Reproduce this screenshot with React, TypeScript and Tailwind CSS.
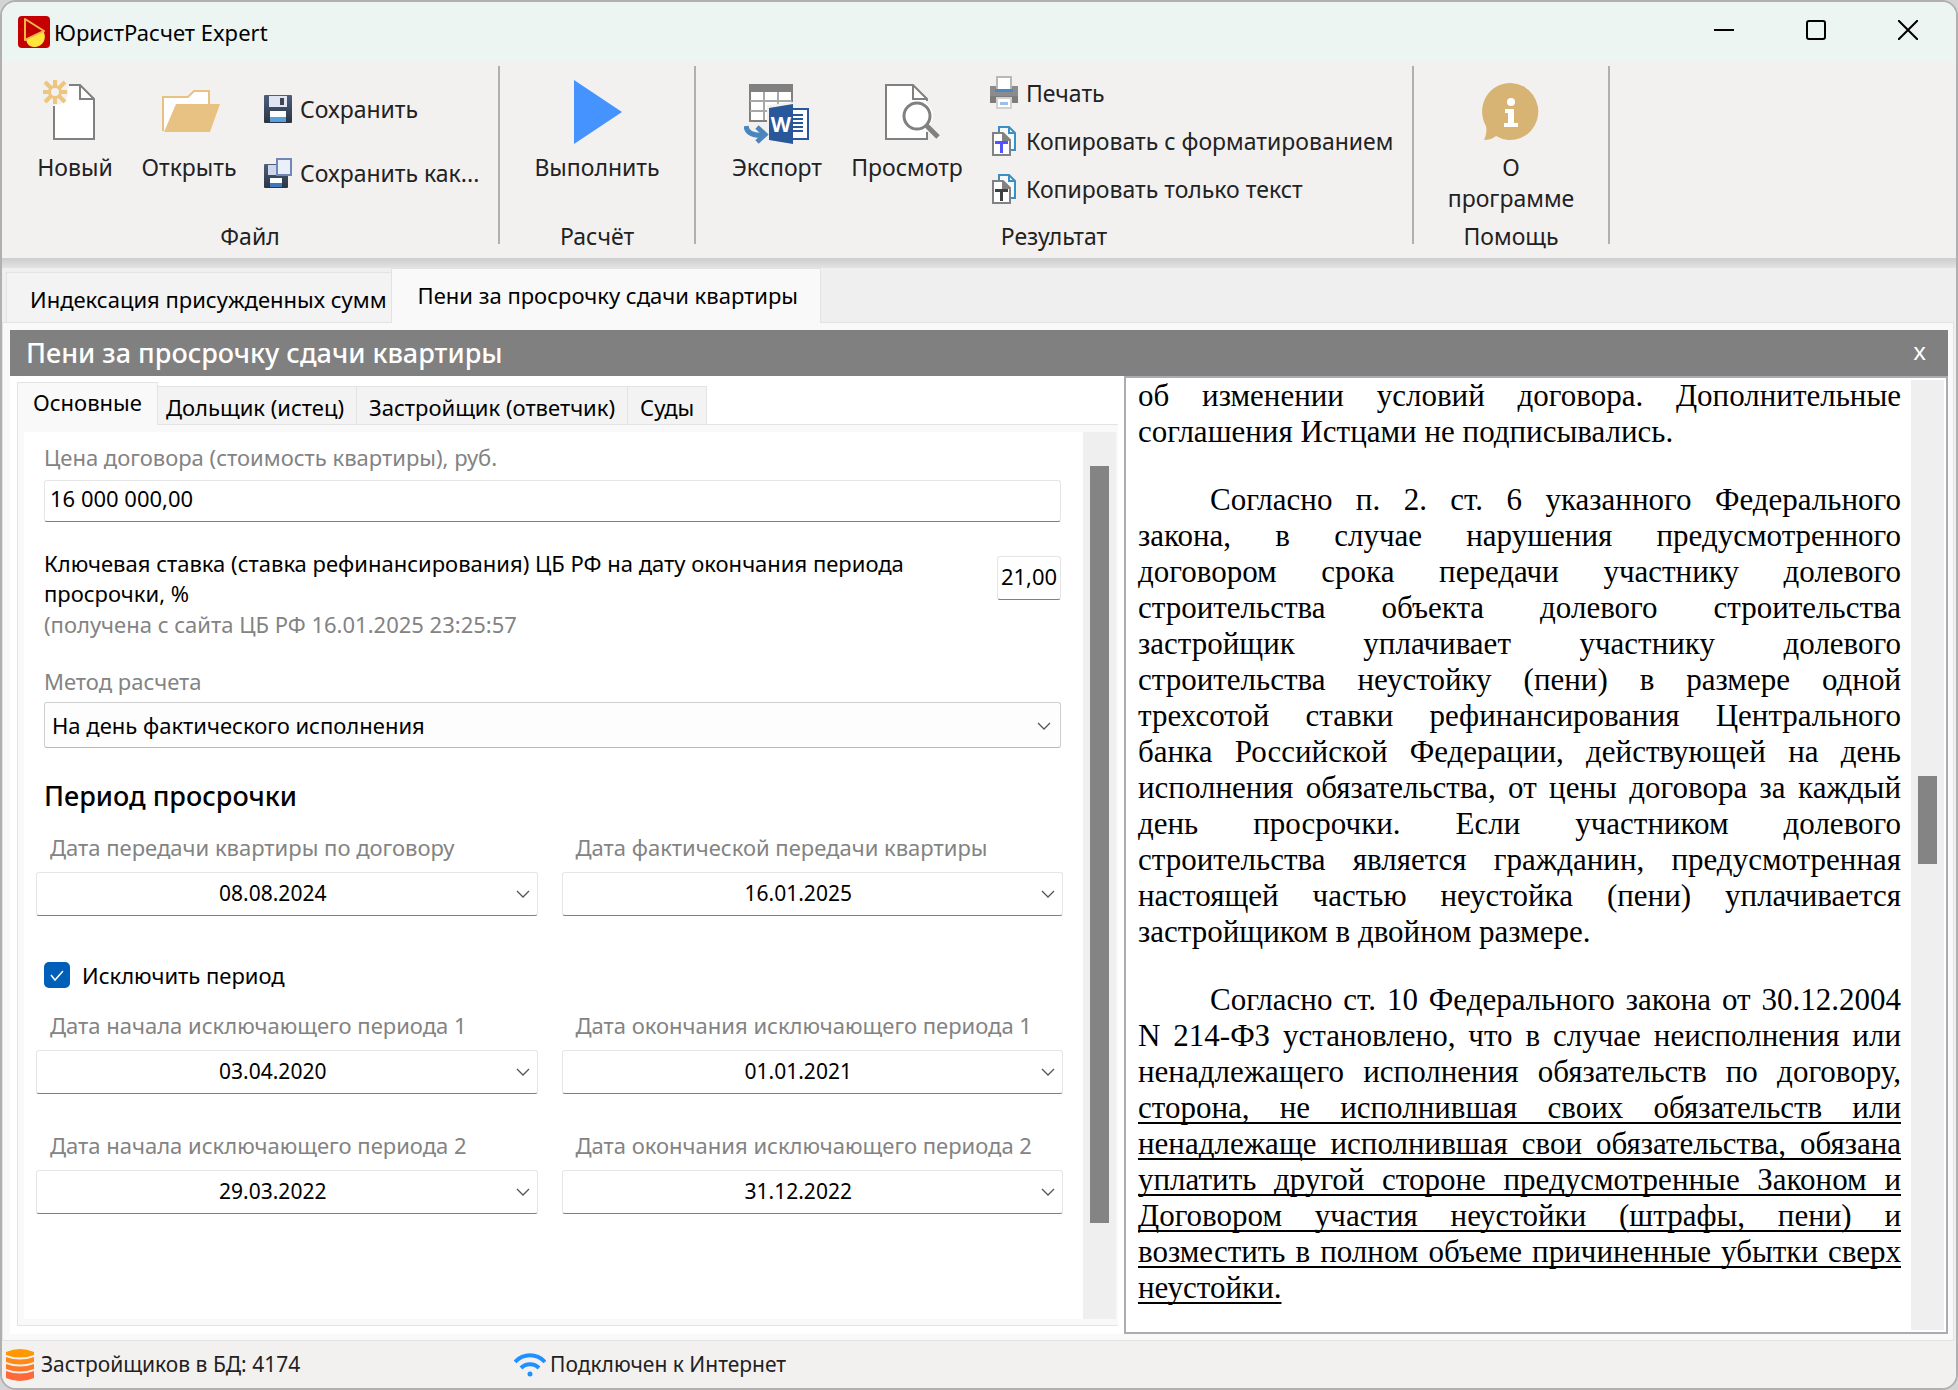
import { ReactNode } from "react";

const excludedPeriods = [
  { n: 1, from: "03.04.2020", to: "01.01.2021" },
  { n: 2, from: "29.03.2022", to: "31.12.2022" },
];

const innerTabs = ["Дольщик (истец)", "Застройщик (ответчик)", "Суды"];

/* ---------- Icons ---------- */

function AppIcon() {
  return (
    <svg width="32" height="32" viewBox="0 0 32 32">
      <rect width="32" height="32" rx="4" fill="#c40000" />
      <path d="M8 22 L24 14 C30 20 26 31 16 31 C11 31 8 27 8 22 Z" fill="#ffe53c" />
      <path d="M7 3 L26 15 L7 24 Z" fill="#c00000" stroke="#f4b545" strokeWidth="2" strokeLinejoin="round" />
      <path d="M9 24 L26 16 C27 24 22 30 15 30 C11 29 9 27 9 24 Z" fill="#ffe53c" />
    </svg>
  );
}

function NewIcon() {
  return (
    <svg width="64" height="64" viewBox="0 0 64 64" fill="none">
      <path d="M11 26 V59 H51 V20 L36 5 H26 L20 20 Z" fill="#fff" />
      <path d="M26 5 H37 L51 19 V59 H11 V26" stroke="#808080" strokeWidth="2" />
      <path d="M37 5 V19 H51" stroke="#808080" strokeWidth="2" />
      <circle cx="12" cy="12" r="13" fill="#f3f1f0" />
      <circle cx="12" cy="12" r="5.500" stroke="#ecc67f" strokeWidth="3" />
      <path
        d="M12 0 V6 M12 18 V24 M0 12 H6 M18 12 H24 M2 2 L8 8 M16 16 L22 22 M22 2 L16 8 M2 22 L8 16"
        stroke="#ecc67f"
        strokeWidth="4"
      />
    </svg>
  );
}

function OpenIcon() {
  return (
    <svg width="64" height="64" viewBox="0 0 64 64">
      <path d="M6 51 V17 H31 L37 11 H52 V26" fill="#fff" stroke="#e8c282" strokeWidth="2" />
      <path d="M19 24 H63 L53 52 H7 Z" fill="#e8c282" />
    </svg>
  );
}

function RunIcon() {
  return (
    <svg width="64" height="64" viewBox="0 0 64 64">
      <path d="M9 0 L57 32 L9 64 Z" fill="#4493ff" />
    </svg>
  );
}

function ExportIcon() {
  return (
    <svg width="66" height="64" viewBox="0 0 66 64" fill="none">
      <rect x="6" y="5" width="42" height="36" fill="#fff" stroke="#808080" strokeWidth="2" />
      <path d="M6 21 H48 M6 31 H48 M20 12 V40 M34 12 V40" stroke="#a8a8a8" strokeWidth="2" />
      <rect x="5" y="4" width="44" height="8" fill="#808080" />
      <path d="M23 25 L50 22 V64 L23 60 Z" fill="#f3f1f0" />
      <rect x="48" y="29" width="16" height="30" fill="#fff" stroke="#2a579a" strokeWidth="2" />
      <path d="M49 35 H59 M49 39 H59 M49 43 H59 M49 47 H59 M49 51 H59" stroke="#2a579a" strokeWidth="2" />
      <path d="M25 28 L49 24 V64 L25 60 Z" fill="#2a579a" />
      <text x="37" y="52" textAnchor="middle" fontSize="21" fontWeight="700" fill="#fff" fontFamily="Open Sans, sans-serif">
        W
      </text>
      <path d="M2 46 C3 54 10 56 21 55" stroke="#4a86bd" strokeWidth="5" />
      <path d="M13 47 L21 54.500 L13 62" stroke="#4a86bd" strokeWidth="5" />
    </svg>
  );
}

function PreviewIcon() {
  return (
    <svg width="66" height="64" viewBox="0 0 66 64" fill="none">
      <path d="M12 5 H39 L53 19 V59 H12 Z" fill="#fff" stroke="#808080" strokeWidth="2" />
      <path d="M39 5 V19 H53" stroke="#808080" strokeWidth="2" />
      <path d="M54 21 V52" stroke="#f3f1f0" strokeWidth="4" />
      <circle cx="43" cy="36" r="16" fill="#fff" />
      <circle cx="43" cy="36" r="13" fill="#fff" stroke="#808080" strokeWidth="3" />
      <path d="M52 45 L64 57" stroke="#808080" strokeWidth="5" />
    </svg>
  );
}

function AboutIcon() {
  return (
    <svg width="64" height="64" viewBox="0 0 64 64">
      <path d="M32 3 A28 28.500 0 1 1 17 56 C13 59 9 60 5 60 C7 56 8 51 7 46 A28 28.500 0 0 1 32 3 Z" fill="#d7b374" />
      <circle cx="32" cy="22" r="4" fill="#fff" />
      <path d="M26 29 H35 V43 H39 V47 H25 V43 H29 V33 H26 Z" fill="#fff" />
    </svg>
  );
}

function SaveIcon() {
  return (
    <svg width="28" height="28" viewBox="0 0 28 28">
      <defs>
        <linearGradient id="disk" x1="0" y1="0" x2="0" y2="1">
          <stop offset="0" stopColor="#4d5f7c" />
          <stop offset="1" stopColor="#2a3444" />
        </linearGradient>
      </defs>
      <rect width="28" height="28" rx="1" fill="url(#disk)" />
      <rect x="5" y="1" width="18" height="11" fill="#dfe5f1" />
      <rect x="16" y="3" width="4" height="7" fill="#3c4657" />
      <rect x="6" y="16" width="16" height="7" fill="#fbfdfe" />
      <rect x="6" y="22" width="16" height="5" fill="#58a0d8" />
    </svg>
  );
}

function SaveAsIcon() {
  return (
    <svg width="28" height="30" viewBox="0 0 28 30">
      <rect y="6" width="24" height="24" rx="1" fill="url(#disk)" />
      <rect x="4" y="7" width="12" height="10" fill="#cfd8ea" />
      <rect x="6" y="20" width="12" height="6" fill="#fbfdfe" />
      <rect x="6" y="25" width="12" height="4" fill="#3f78bd" />
      <rect x="13" y="1" width="14" height="16" fill="#eaf0fa" stroke="#7486b8" strokeWidth="2" />
    </svg>
  );
}

function PrintIcon() {
  return (
    <svg width="28" height="34" viewBox="0 0 28 34">
      <path d="M0 10 H28 V26 H0 Z" fill="#8b8b8b" />
      <rect x="7" y="1" width="14" height="14" fill="#fff" stroke="#b8b8b8" strokeWidth="2" />
      <path d="M5 13 H23 V16 H5 Z" fill="#4a86c8" />
      <path d="M0 20 H28 V27 H0 Z" fill="#7c7c7c" />
      <rect x="7" y="22" width="14" height="10" fill="#fff" stroke="#d0d0d0" strokeWidth="2" />
      <rect x="10" y="26" width="8" height="3" fill="#9cc0e8" />
    </svg>
  );
}

function CopyIcon({ color }: { color: string }) {
  return (
    <svg width="28" height="32" viewBox="0 0 28 32" fill="none">
      <path d="M9 7 V2 H19 L25 8 V25 H20" fill="#f6fafd" stroke="#3a8fc6" strokeWidth="2" />
      <path d="M19 2 V8 H25" stroke="#3a8fc6" strokeWidth="2" />
      <path d="M3 8 H13 L20 15 V30 H3 Z" fill="#fff" stroke="#828282" strokeWidth="2" />
      <path d="M13 8 V15 H20" fill="#828282" stroke="#828282" strokeWidth="2" />
      <path d="M5 19 V16 H18 V19 H13 V28 H10 V19 Z" fill={color} />
    </svg>
  );
}

function Chevron() {
  return (
    <svg width="14" height="8" viewBox="0 0 14 8" fill="none">
      <path d="M1 1 L7 7 L13 1" stroke="#555" strokeWidth="1.300" />
    </svg>
  );
}

function DatabaseIcon() {
  return (
    <svg width="28" height="32" viewBox="0 0 28 32">
      <path d="M0 3 Q14 -3 28 3 V6 Q14 11 0 6 Z" fill="#ff9800" />
      <path d="M0 8 Q14 13 28 8 V13 Q14 18 0 13 Z" fill="#ff8a18" />
      <path d="M0 15 Q14 20 28 15 V20 Q14 25 0 20 Z" fill="#ff7a28" />
      <path d="M0 22 Q14 27 28 22 V29 Q14 35 0 29 Z" fill="#ff6838" />
    </svg>
  );
}

function WifiIcon() {
  return (
    <svg width="32" height="24" viewBox="0 0 32 24" fill="none" stroke="#1e90ff" strokeWidth="4">
      <path d="M1 9 C9 0 23 0 31 9" />
      <path d="M7 15 C12 10 20 10 25 15" />
      <circle cx="16" cy="21" r="2.500" fill="#1e90ff" stroke="none" />
    </svg>
  );
}

/* ---------- Ribbon ---------- */

function RibbonGroup({ title, width, children }: { title: string; width: string; children: ReactNode }) {
  return (
    <section className={`flex h-[178px] flex-col border-r-2 border-[#b0b0b0] ${width}`}>
      <div className="flex h-[158px] shrink-0 items-start pt-[3px]">{children}</div>
      <h2 className="text-center leading-6">{title}</h2>
    </section>
  );
}

function BigButton({ icon, label, width }: { icon: ReactNode; label: string; width: string }) {
  return (
    <button type="button" className={`flex flex-col items-center gap-2 pt-[11px] ${width}`}>
      <span className="flex h-16 justify-center">{icon}</span>
      <span className="leading-[31px]">{label}</span>
    </button>
  );
}

function SmallButton({ icon, label, height }: { icon: ReactNode; label: string; height: string }) {
  return (
    <button type="button" className={`flex items-center gap-2 whitespace-nowrap ${height}`}>
      {icon}
      {label}
    </button>
  );
}

function Ribbon() {
  return (
    <nav className="flex h-[196px] bg-[#f3f1f0] pt-1 text-[23px] text-[#222]">
      <RibbonGroup title="Файл" width="w-[498px]">
        <div className="flex items-start pl-4">
          <BigButton icon={<NewIcon />} label="Новый" width="w-[114px]" />
          <BigButton icon={<OpenIcon />} label="Открыть" width="w-[114px]" />
          <div className="mt-2 flex flex-col pl-[18px]">
            <SmallButton icon={<SaveIcon />} label="Сохранить" height="h-16" />
            <SmallButton icon={<SaveAsIcon />} label="Сохранить как..." height="h-16" />
          </div>
        </div>
      </RibbonGroup>
      <RibbonGroup title="Расчёт" width="w-[196px]">
        <BigButton icon={<RunIcon />} label="Выполнить" width="w-full" />
      </RibbonGroup>
      <RibbonGroup title="Результат" width="w-[718px]">
        <div className="flex items-start pl-4">
          <BigButton icon={<ExportIcon />} label="Экспорт" width="w-[130px]" />
          <BigButton icon={<PreviewIcon />} label="Просмотр" width="w-[130px]" />
          <div className="flex flex-col pl-[18px]">
            <SmallButton icon={<PrintIcon />} label="Печать" height="h-12" />
            <SmallButton icon={<CopyIcon color="#5252ff" />} label="Копировать с форматированием" height="h-12" />
            <SmallButton icon={<CopyIcon color="#404040" />} label="Копировать только текст" height="h-12" />
          </div>
        </div>
      </RibbonGroup>
      <RibbonGroup title="Помощь" width="w-[196px]">
        <BigButton icon={<AboutIcon />} label="О программе" width="w-full px-7" />
      </RibbonGroup>
    </nav>
  );
}

/* ---------- Form ---------- */

function DateField({ id, label, value }: { id: string; label: string; value: string }) {
  return (
    <div>
      <label htmlFor={id} className="block pl-[14px] leading-[30px] text-[#838383]">
        {label}
      </label>
      <div className="mt-[10px] flex h-11 items-center rounded-[3px] border border-[#e6e6e6] border-b-[#808080] bg-white">
        <input id={id} defaultValue={value} className="w-0 flex-1 text-center text-[21px] outline-none" />
        <button type="button" aria-label={label} className="flex w-7 justify-center">
          <Chevron />
        </button>
      </div>
    </div>
  );
}

function MainForm() {
  return (
    <form className="min-w-0 flex-1 bg-white pt-[10px] pr-5 pl-3 text-[22px]">
      <div className="pr-[2px] pl-2">
        <label htmlFor="price" className="block leading-[30px] text-[#838383]">
          Цена договора (стоимость квартиры), руб.
        </label>
        <input
          id="price"
          defaultValue="16 000 000,00"
          className="mt-2 block h-[42px] w-full rounded-[3px] border border-[#e6e6e6] border-b-[#808080] px-[5px] pb-[6px] outline-none"
        />

        <div className="mt-[26px] flex items-start justify-between gap-6">
          <div>
            <label htmlFor="rate" className="block max-w-[900px] leading-[30px]">
              Ключевая ставка (ставка рефинансирования) ЦБ РФ на дату окончания периода просрочки, %
            </label>
            <p className="leading-8 text-[#838383]">(получена с сайта ЦБ РФ 16.01.2025 23:25:57</p>
          </div>
          <input
            id="rate"
            defaultValue="21,00"
            className="mt-2 h-11 w-16 rounded-[3px] border border-[#e6e6e6] border-b-[#808080] pb-1 text-center outline-none"
          />
        </div>

        <label htmlFor="method" className="mt-[26px] block leading-[30px] text-[#838383]">
          Метод расчета
        </label>
        <div className="relative mt-[6px]">
          <select
            id="method"
            className="h-[46px] w-full appearance-none rounded-[3px] border border-[#cfcfcf] border-b-[#b8b8b8] bg-[#fdfdfd] px-[7px] outline-none"
          >
            <option>На день фактического исполнения</option>
          </select>
          <span className="pointer-events-none absolute top-5 right-[10px]">
            <Chevron />
          </span>
        </div>

        <h2 className="mt-[30px] text-[27px] leading-9 font-medium">Период просрочки</h2>
      </div>

      <div className="mt-[18px] grid grid-cols-2 gap-x-6">
        <DateField id="due" label="Дата передачи квартиры по договору" value="08.08.2024" />
        <DateField id="fact" label="Дата фактической передачи квартиры" value="16.01.2025" />
      </div>

      <label className="mt-11 flex items-center gap-3 px-2 leading-[30px]">
        <span className="relative flex h-[26px] w-[26px]">
          <input type="checkbox" defaultChecked className="h-full w-full appearance-none rounded-[5px] bg-[#005fb8]" />
          <svg className="pointer-events-none absolute inset-0" width="26" height="26" viewBox="0 0 26 26" fill="none">
            <path d="M7 13 L11 18 L19 9" stroke="#fff" strokeWidth="1.500" />
          </svg>
        </span>
        Исключить период
      </label>

      <div className="mt-5 grid grid-cols-2 gap-x-6 gap-y-9">
        {excludedPeriods.map((p) => [
          <DateField key={`from${p.n}`} id={`from${p.n}`} label={`Дата начала исключающего периода ${p.n}`} value={p.from} />,
          <DateField key={`to${p.n}`} id={`to${p.n}`} label={`Дата окончания исключающего периода ${p.n}`} value={p.to} />,
        ])}
      </div>
    </form>
  );
}

function FormPanel() {
  return (
    <div className="flex min-w-0 flex-col pt-[6px] pr-[6px] pb-2 pl-[7px] text-[22px]">
      <div className="flex h-[42px] items-end">
        <button
          type="button"
          className="relative z-10 -mr-1 -mb-px h-[43px] border border-b-0 border-[#e3e3e3] bg-[#f9f9f9] pr-[15px] pb-1 pl-[15px] leading-8"
        >
          Основные
        </button>
        {innerTabs.map((tab) => (
          <button
            key={tab}
            type="button"
            className="h-[38px] border border-b-0 border-l-0 border-[#e3e3e3] bg-[#f3f3f3] px-3 pt-[2px] leading-8"
          >
            {tab}
          </button>
        ))}
      </div>
      <div className="flex flex-1 border border-r-0 border-[#e3e3e3] bg-[#f9f9f9] pt-[7px] pr-[2px] pb-[6px] pl-[6px]">
        <MainForm />
        <div className="flex w-[33px] flex-col items-center bg-[#efefef] pt-[34px]">
          <div className="h-[757px] w-[19px] bg-[#848484]" />
        </div>
      </div>
    </div>
  );
}

/* ---------- Document ---------- */

function DocumentPanel() {
  return (
    <div className="flex border-2 border-[#ababb2] bg-white pr-[2px] pb-[2px] pl-3">
      <article className="flex-1 pr-[10px] text-justify font-['Liberation_Serif',serif] text-[31px] leading-9">
        <p>об изменении условий договора. Дополнительные соглашения Истцами не подписывались.</p>
        <p className="mt-8 indent-[72px]">
          Согласно п. 2. ст. 6 указанного Федерального закона, в случае нарушения предусмотренного договором срока
          передачи участнику долевого строительства объекта долевого строительства застройщик уплачивает участнику
          долевого строительства неустойку (пени) в размере одной трехсотой ставки рефинансирования Центрального{" "}
          банка&nbsp;Российской Федерации, действующей на день исполнения обязательства, от цены договора за каждый
          день просрочки. Если участником долевого строительства является гражданин, предусмотренная настоящей частью
          неустойка (пени) уплачивается застройщиком в двойном размере.
        </p>
        <p className="mt-8 indent-[72px]">
          Согласно ст. 10 Федерального закона от 30.12.2004 N 214-ФЗ установлено, что в случае неисполнения или
          ненадлежащего исполнения обязательств по договору,{" "}
          <span className="underline decoration-2 underline-offset-4 [text-decoration-skip-ink:none]">
            сторона, не исполнившая своих обязательств или ненадлежаще исполнившая свои обязательства, обязана уплатить
            другой стороне предусмотренные Законом и Договором участия неустойки (штрафы, пени) и возместить в полном
            объеме причиненные убытки сверх неустойки.
          </span>
        </p>
      </article>
      <div className="mt-[2px] flex w-[33px] flex-col items-center bg-[#efefef] pt-[396px]">
        <div className="h-[88px] w-[19px] bg-[#848484]" />
      </div>
    </div>
  );
}

export default function App() {
  return (
    <div className="min-h-screen bg-[#d4d4d4]">
      <div className="flex min-h-screen flex-col overflow-hidden rounded-2xl border-2 border-[#b0b0b0] bg-[#efefef] font-['Noto_Sans','Open_Sans',sans-serif] text-black">
        <header className="flex h-[60px] items-center bg-[#ecf5f2] pr-[2px] pl-4">
          <AppIcon />
          <h1 className="ml-1 flex-1 text-[22px]">ЮристРасчет Expert</h1>
          <button type="button" aria-label="Свернуть" className="flex w-[92px] justify-center pb-1">
            <svg width="20" height="20" viewBox="0 0 20 20" fill="none">
              <path d="M0 10 H20" stroke="#000" strokeWidth="2" />
            </svg>
          </button>
          <button type="button" aria-label="Развернуть" className="flex w-[92px] justify-center pb-1">
            <svg width="20" height="20" viewBox="0 0 20 20" fill="none">
              <rect x="1" y="1" width="18" height="18" rx="2" stroke="#000" strokeWidth="2" />
            </svg>
          </button>
          <button type="button" aria-label="Закрыть" className="flex w-[92px] justify-center pb-1">
            <svg width="20" height="20" viewBox="0 0 20 20" fill="none">
              <path d="M0 0 L20 20 M20 0 L0 20" stroke="#000" strokeWidth="2" />
            </svg>
          </button>
        </header>

        <Ribbon />
        <div className="h-[10px] bg-linear-to-b from-[#cdcdcd] to-[#e3e3e3]" />

        <div className="flex h-[54px] items-end pl-1 text-[22px]">
          <button
            type="button"
            className="h-[50px] border border-r-0 border-b-0 border-[#e3e3e3] bg-[#f3f3f3] pt-1 pr-1 pl-[23px]"
          >
            Индексация присужденных сумм
          </button>
          <button
            type="button"
            className="relative z-10 -mb-px h-[55px] border border-b-0 border-[#e3e3e3] bg-[#f9f9f9] pr-[22px] pb-px pl-[26px]"
          >
            Пени за просрочку сдачи квартиры
          </button>
        </div>

        <main className="mr-[2px] flex flex-1 flex-col border border-[#e3e3e3] bg-[#f9f9f9] pt-[7px] pr-[5px] pb-[6px] pl-[7px]">
          <div className="flex h-[46px] items-center justify-between bg-[#808080] pr-[22px] pl-4 text-white">
            <h2 className="text-[27px] font-medium">Пени за просрочку сдачи квартиры</h2>
            <button type="button" aria-label="Закрыть вкладку" className="pb-1 text-2xl">
              x
            </button>
          </div>
          <div className="grid flex-1 grid-cols-[1114fr_824fr] bg-white">
            <FormPanel />
            <DocumentPanel />
          </div>
        </main>

        <footer className="flex h-[47px] items-center bg-[#f3f1f0] pl-1 text-[21px] text-[#222]">
          <div className="flex w-[508px] items-center gap-[7px]">
            <DatabaseIcon />
            Застройщиков в БД: 4174
          </div>
          <div className="flex items-center gap-1">
            <WifiIcon />
            Подключен к Интернет
          </div>
        </footer>
      </div>
    </div>
  );
}
